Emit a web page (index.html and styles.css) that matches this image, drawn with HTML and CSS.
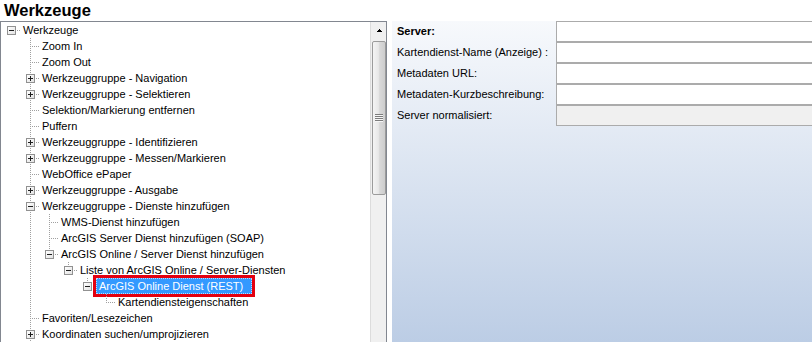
FILE: index.html
```html
<!DOCTYPE html>
<html lang="de">
<head>
<meta charset="utf-8">
<title>Werkzeuge</title>
<link rel="stylesheet" href="styles.css">
</head>
<body>
<div class="app">
  <h1 class="title">Werkzeuge</h1>
  <div class="main">
    <div class="treepanel">
      <div class="tree">
        <div class="row"><span class="c h"><span class="box minus"></span></span><span class="label">Werkzeuge</span></div>
        <div class="row"><span class="c"></span><span class="c t"></span><span class="label">Zoom In</span></div>
        <div class="row"><span class="c"></span><span class="c t"></span><span class="label">Zoom Out</span></div>
        <div class="row"><span class="c"></span><span class="c t"><span class="box plus"></span></span><span class="label">Werkzeuggruppe - Navigation</span></div>
        <div class="row"><span class="c"></span><span class="c t"><span class="box plus"></span></span><span class="label">Werkzeuggruppe - Selektieren</span></div>
        <div class="row"><span class="c"></span><span class="c t"></span><span class="label">Selektion/Markierung entfernen</span></div>
        <div class="row"><span class="c"></span><span class="c t"></span><span class="label">Puffern</span></div>
        <div class="row"><span class="c"></span><span class="c t"><span class="box plus"></span></span><span class="label">Werkzeuggruppe - Identifizieren</span></div>
        <div class="row"><span class="c"></span><span class="c t"><span class="box plus"></span></span><span class="label">Werkzeuggruppe - Messen/Markieren</span></div>
        <div class="row"><span class="c"></span><span class="c t"></span><span class="label">WebOffice ePaper</span></div>
        <div class="row"><span class="c"></span><span class="c t"><span class="box plus"></span></span><span class="label">Werkzeuggruppe - Ausgabe</span></div>
        <div class="row"><span class="c"></span><span class="c t"><span class="box minus"></span></span><span class="label">Werkzeuggruppe - Dienste hinzufügen</span></div>
        <div class="row"><span class="c"></span><span class="c v"></span><span class="c t"></span><span class="label">WMS-Dienst hinzufügen</span></div>
        <div class="row"><span class="c"></span><span class="c v"></span><span class="c t"></span><span class="label">ArcGIS Server Dienst hinzufügen (SOAP)</span></div>
        <div class="row"><span class="c"></span><span class="c v"></span><span class="c l"><span class="box minus"></span></span><span class="label">ArcGIS Online / Server Dienst hinzufügen</span></div>
        <div class="row"><span class="c"></span><span class="c v"></span><span class="c"></span><span class="c l"><span class="box minus"></span></span><span class="label">Liste von ArcGIS Online / Server-Diensten</span></div>
        <div class="row"><span class="c"></span><span class="c v"></span><span class="c"></span><span class="c"></span><span class="c l"><span class="box minus"></span></span><span class="label sel">ArcGIS Online Dienst (REST)</span></div>
        <div class="row"><span class="c"></span><span class="c v"></span><span class="c"></span><span class="c"></span><span class="c"></span><span class="c l"></span><span class="label">Kartendiensteigenschaften</span></div>
        <div class="row"><span class="c"></span><span class="c t"></span><span class="label">Favoriten/Lesezeichen</span></div>
        <div class="row"><span class="c"></span><span class="c t"><span class="box plus"></span></span><span class="label">Koordinaten suchen/umprojizieren</span></div>
      </div>
      <div class="vscroll">
        <div class="sb-btn">
          <svg class="sb-arrow" width="5" height="3" viewBox="0 0 5 3"><rect x="2" y="0" width="1" height="1" fill="#000"/><rect x="1" y="1" width="3" height="1" fill="#000"/><rect x="0" y="2" width="5" height="1" fill="#000"/></svg>
        </div>
        <div class="sb-thumb"><span class="grip"></span></div>
      </div>
    </div>
    <div class="props">
      <div class="form">
        <div class="lbl bold">Server:</div><div class="field"></div>
        <div class="lbl">Kartendienst-Name (Anzeige) :</div><div class="field"></div>
        <div class="lbl">Metadaten URL:</div><div class="field"></div>
        <div class="lbl">Metadaten-Kurzbeschreibung:</div><div class="field"></div>
        <div class="lbl">Server normalisiert:</div><div class="field dis"></div>
      </div>
    </div>
  </div>
</div>
</body>
</html>
```

FILE: styles.css
```css
html, body {
  margin: 0;
  padding: 0;
}

body {
  width: 812px;
  height: 342px;
  overflow: hidden;
  background: #ffffff;
  font-family: "Liberation Sans", Arial, sans-serif;
  font-size: 11px;
  color: #000000;
}

.app {
  display: flex;
  flex-direction: column;
  height: 342px;
}

.title {
  margin: 0;
  height: 21px;
  line-height: 21px;
  font-size: 16.5px;
  font-weight: bold;
  padding-left: 4px;
  flex: none;
}

.main {
  flex: 1;
  display: flex;
  min-height: 0;
}

/* ---------- tree panel ---------- */
.treepanel {
  flex: none;
  width: 387px;
  box-sizing: border-box;
  border: 1px solid #828790;
  border-bottom: none;
  margin-right: 5px;
  display: flex;
  background: #ffffff;
}

.tree {
  flex: 1;
  min-width: 0;
  overflow: hidden;
  padding-left: 1px;
}

.row {
  display: flex;
  height: 16px;
  line-height: 16px;
  white-space: nowrap;
}

.c {
  flex: none;
  width: 19px;
  height: 16px;
  background-repeat: no-repeat;
}

/* vertical through-line */
.c.v {
  background-image: repeating-linear-gradient(to bottom, #a0a0a0 0 1px, transparent 1px 2px);
  background-size: 1px 16px;
  background-position: 9px 0;
}

/* tee: vertical + horizontal */
.c.t {
  background-image:
    repeating-linear-gradient(to bottom, #a0a0a0 0 1px, transparent 1px 2px),
    repeating-linear-gradient(to right, #a0a0a0 0 1px, transparent 1px 2px);
  background-size: 1px 16px, 9px 1px;
  background-position: 9px 0, 11px 8px;
}

/* corner: upper half + horizontal */
.c.l {
  background-image:
    repeating-linear-gradient(to bottom, #a0a0a0 0 1px, transparent 1px 2px),
    repeating-linear-gradient(to right, #a0a0a0 0 1px, transparent 1px 2px);
  background-size: 1px 9px, 9px 1px;
  background-position: 9px 0, 11px 8px;
}

/* horizontal only (root) */
.c.h {
  background-image: repeating-linear-gradient(to right, #a0a0a0 0 1px, transparent 1px 2px);
  background-size: 9px 1px;
  background-position: 11px 8px;
}

.box {
  display: block;
  width: 9px;
  height: 9px;
  box-sizing: border-box;
  margin: 4px 0 0 5px;
  border: 1px solid #919191;
  background-color: #f4f4f4;
  background-repeat: no-repeat;
}

.box.minus {
  background-image:
    linear-gradient(#1e1e1e, #1e1e1e),
    linear-gradient(135deg, #ffffff, #e2e2e2);
  background-size: 5px 1px, 100% 100%;
  background-position: 1px 3px, 0 0;
}

.box.plus {
  background-image:
    linear-gradient(#1e1e1e, #1e1e1e),
    linear-gradient(#1e1e1e, #1e1e1e),
    linear-gradient(135deg, #ffffff, #e2e2e2);
  background-size: 5px 1px, 1px 5px, 100% 100%;
  background-position: 1px 3px, 3px 1px, 0 0;
}

.label {
  padding: 0 2px;
}

.label.sel {
  background: #3399ff;
  color: #ffffff;
  line-height: 14px;
  border: 1px dotted #b8dcff;
  margin-left: -1px;
  padding: 0 8px 0 2px;
  outline: 3px solid #e3000f;
}

/* ---------- scrollbar ---------- */
.vscroll {
  flex: none;
  width: 16px;
  box-sizing: border-box;
  border-left: 1px solid #dcdcdc;
  background: #f0f0f0;
  display: flex;
  flex-direction: column;
}

.sb-btn {
  flex: none;
  height: 17px;
  box-sizing: border-box;
  padding: 7px 0 0 6px;
  line-height: 0;
}

.sb-arrow {
  display: block;
}

.sb-thumb {
  flex: none;
  height: 154px;
  margin: 2px 0 0 1px;
  box-sizing: border-box;
  border: 1px solid #9b9b9b;
  border-radius: 2px;
  background: linear-gradient(to right, #f4f4f4, #e8e8e8 45%, #d9d9d9 55%, #cdcdcd);
  display: flex;
  align-items: center;
  justify-content: center;
}

.grip {
  display: block;
  width: 8px;
  height: 8px;
  background: repeating-linear-gradient(to bottom, #7c7c7c 0 1px, #f6f6f6 1px 2px);
}

/* ---------- properties panel ---------- */
.props {
  flex: 1;
  min-width: 0;
  overflow: hidden;
  background: linear-gradient(to bottom, #f7f9fc, #bccde5);
}

.form {
  display: grid;
  grid-template-columns: 164px 320px;
  grid-auto-rows: 21px;
}

.lbl {
  padding-left: 5px;
  line-height: 21px;
  white-space: nowrap;
}

.lbl.bold {
  font-weight: bold;
}

.field {
  box-sizing: border-box;
  border: 1px solid #ababab;
  background: #ffffff;
}

.field.dis {
  background: #f0f0f0;
}
```
